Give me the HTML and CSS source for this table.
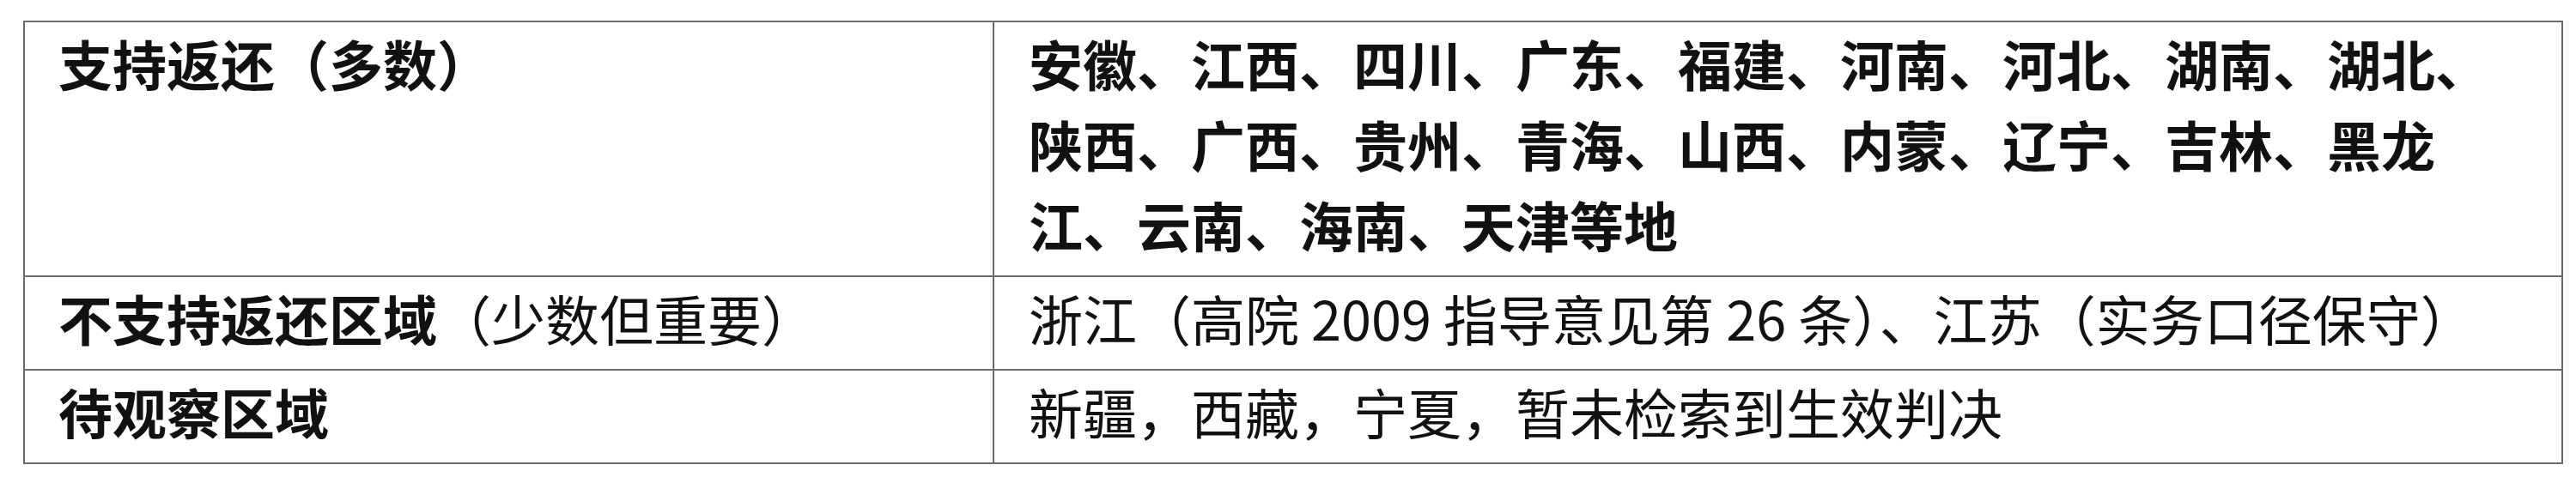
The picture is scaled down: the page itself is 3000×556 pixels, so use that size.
FILE: index.html
```html
<!DOCTYPE html>
<html lang="zh-CN">
<head>
<meta charset="utf-8">
<title>返还区域</title>
<link rel="stylesheet" href="styles.css">
</head>
<body>
<div class="page">
  <table class="regions">
    <colgroup>
      <col class="col-label">
      <col class="col-value">
    </colgroup>
    <tr>
      <td class="label"><strong>支持返还（多数）</strong></td>
      <td class="value"><strong>安徽、江西、四川、广东、福建、河南、河北、湖南、湖北、陕西、广西、贵州、青海、山西、内蒙、辽宁、吉林、黑龙江、云南、海南、天津等地</strong></td>
    </tr>
    <tr>
      <td class="label"><strong>不支持返还区域</strong>（少数但重要）</td>
      <td class="value">浙江（高院 2009 指导意见第 26 条）、江苏（实务口径保守）</td>
    </tr>
    <tr>
      <td class="label"><strong>待观察区域</strong></td>
      <td class="value">新疆，西藏，宁夏，暂未检索到生效判决</td>
    </tr>
  </table>
</div>
</body>
</html>
```

FILE: styles.css
```css
html, body {
  margin: 0;
  padding: 0;
  background: #ffffff;
}

.page {
  padding: 24px 0 0 27px;
}

.regions {
  border-collapse: collapse;
  table-layout: fixed;
  width: 2958px;
  font-family: "Noto Sans CJK SC", "Liberation Sans", sans-serif;
  font-size: 63px;
  line-height: 94px;
  color: #111111;
}

.col-label {
  width: 1129px;
}

.regions td {
  border: 2px solid #6a6a6a;
  vertical-align: top;
  padding: 0 30px 13px 39px;
  font-weight: 400;
}

.regions td.value {
  padding-left: 40px;
}

.regions strong {
  font-weight: 700;
}
```
